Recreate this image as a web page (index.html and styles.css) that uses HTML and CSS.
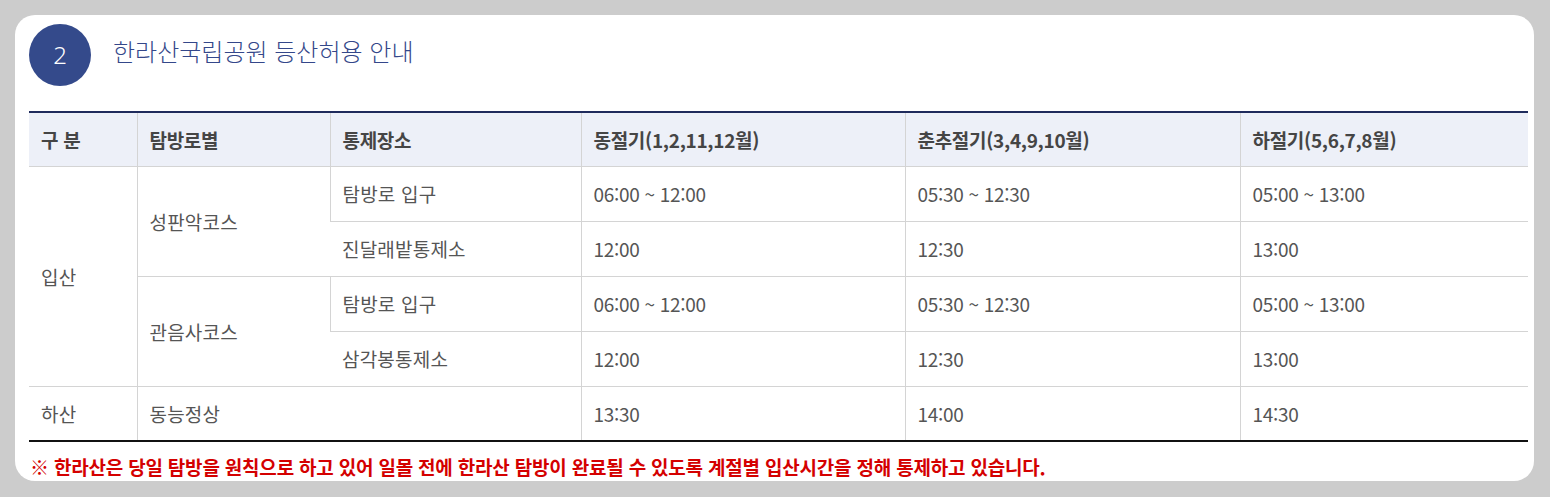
FILE: index.html
```html
<!DOCTYPE html>
<html lang="ko">
<head>
<meta charset="utf-8">
<link rel="stylesheet" href="styles.css">
</head>
<body>
<div class="card">
  <div class="heading">
    <span class="num">2</span>
    <h2 class="title">한라산국립공원 등산허용 안내</h2>
  </div>
  <table class="tbl">
    <colgroup>
      <col class="c1"><col class="c2"><col class="c3"><col class="c4"><col class="c5"><col class="c6">
    </colgroup>
    <thead>
      <tr>
        <th>구 분</th>
        <th>탐방로별</th>
        <th>통제장소</th>
        <th>동절기(1,2,11,12월)</th>
        <th>춘추절기(3,4,9,10월)</th>
        <th>하절기(5,6,7,8월)</th>
      </tr>
    </thead>
    <tbody>
      <tr class="r55">
        <td rowspan="4">입산</td>
        <td rowspan="2">성판악코스</td>
        <td>탐방로 입구</td>
        <td class="t">06:00 ~ 12:00</td>
        <td class="t">05:30 ~ 12:30</td>
        <td class="t">05:00 ~ 13:00</td>
      </tr>
      <tr class="r55">
        <td>진달래밭통제소</td>
        <td class="t">12:00</td>
        <td class="t">12:30</td>
        <td class="t">13:00</td>
      </tr>
      <tr class="r55 mid">
        <td rowspan="2">관음사코스</td>
        <td>탐방로 입구</td>
        <td class="t">06:00 ~ 12:00</td>
        <td class="t">05:30 ~ 12:30</td>
        <td class="t">05:00 ~ 13:00</td>
      </tr>
      <tr class="r55">
        <td>삼각봉통제소</td>
        <td class="t">12:00</td>
        <td class="t">12:30</td>
        <td class="t">13:00</td>
      </tr>
      <tr class="r55 last">
        <td>하산</td>
        <td colspan="2">동능정상</td>
        <td class="t">13:30</td>
        <td class="t">14:00</td>
        <td class="t">14:30</td>
      </tr>
    </tbody>
  </table>
  <p class="note">※ 한라산은 당일 탐방을 원칙으로 하고 있어 일몰 전에 한라산 탐방이 완료될 수 있도록 계절별 입산시간을 정해 통제하고 있습니다.</p>
</div>
</body>
</html>
```

FILE: styles.css
```css
html, body {
  margin: 0;
  padding: 0;
}
body {
  background: #cccccc;
  font-family: "Noto Sans CJK KR", "Noto Sans", sans-serif;
  padding: 15px 16px 0 15px;
  height: 497px;
  box-sizing: border-box;
  overflow: hidden;
}
.card {
  background: #ffffff;
  border-radius: 20px;
  height: 466px;
  overflow: hidden;
  padding: 8px 6px 0 14px;
  box-sizing: border-box;
}
.heading {
  display: flex;
  align-items: center;
  gap: 22px;
  height: 63px;
}
.num {
  width: 62px;
  height: 62px;
  border-radius: 50%;
  background: #344a8b;
  color: #fff;
  display: flex;
  align-items: center;
  justify-content: center;
  font-size: 24px;
  font-weight: 300;
  font-family: "Noto Sans", "Noto Sans CJK KR", sans-serif;
}
.title {
  margin: 0 0 8px 0;
  font-size: 24px;
  font-weight: 300;
  color: #34478a;
  letter-spacing: 0;
}
.tbl {
  margin-top: 25px;
  width: 1499px;
  border-collapse: collapse;
  table-layout: fixed;
  border-top: 2px solid #1f2b5c;
  border-bottom: 2px solid #111;
}
.c1 { width: 108px; }
.c2 { width: 193px; }
.c3 { width: 251px; }
.c4 { width: 324px; }
.c5 { width: 335px; }
.c6 { width: 288px; }
.tbl th, .tbl td {
  border-left: 1px solid #d4d4d4;
  border-bottom: 1px solid #d4d4d4;
  text-align: left;
  padding: 0 0 0 12px;
  box-sizing: border-box;
  font-size: 19px;
  letter-spacing: 0.2px;
}
.tbl th {
  height: 54px;
  background: #edf0f8;
  color: #454545;
  font-weight: 700;
  letter-spacing: -0.3px;
}
.tbl th:first-child, .tbl td:first-child {
  border-left: none;
}
.tbl tr.mid td:first-child {
  border-left: 1px solid #d4d4d4;
}
.tbl tr.r55 td { height: 55px; }
.tbl td {
  color: #555555;
  font-weight: 400;
}
.tbl td.t {
  letter-spacing: -0.3px;
}
.tbl tr.last td {
  border-bottom: none;
}
.note {
  margin: 13px 0 0 1px;
  color: #d40000;
  font-weight: 700;
  font-size: 19px;
  line-height: 1.3;
  letter-spacing: -0.2px;
}
```
